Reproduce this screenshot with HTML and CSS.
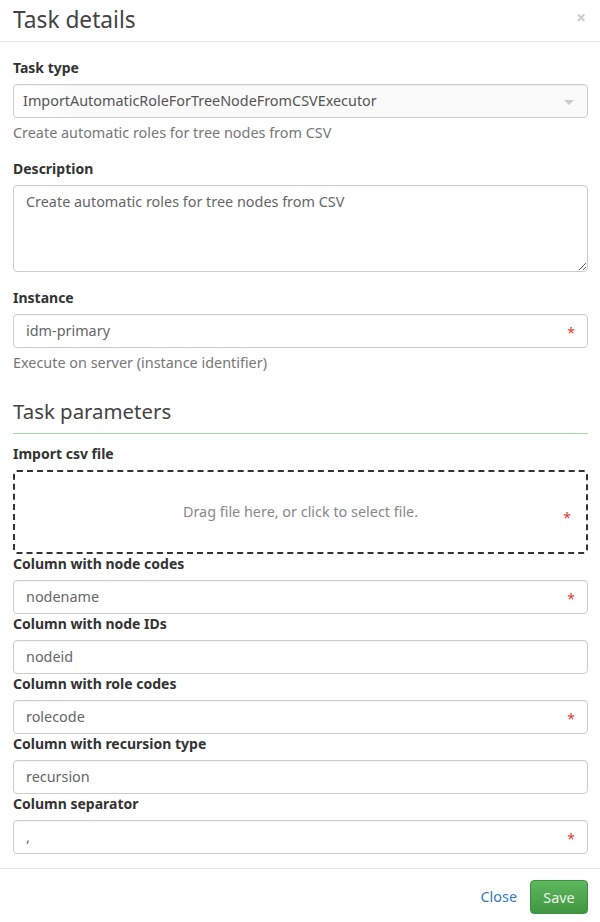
FILE: index.html
```html
<!DOCTYPE html>
<html lang="en">
<head>
  <meta charset="UTF-8">
  <title>Task details</title>
  <link rel="stylesheet" href="styles.css">
</head>
<body>

  <div class="modal">

    <!-- Header -->
    <div class="modal-header">
      <h4 class="modal-title">Task details</h4>
      <span class="close">&times;</span>
    </div>

    <!-- Body -->
    <div class="modal-body">

      <div class="form-group">
        <label>Task type</label>
        <div class="form-control select">
          <span>ImportAutomaticRoleForTreeNodeFromCSVExecutor</span>
          <span class="caret"></span>
        </div>
        <div class="help">Create automatic roles for tree nodes from CSV</div>
      </div>

      <div class="form-group">
        <label>Description</label>
        <textarea class="form-control textarea">Create automatic roles for tree nodes from CSV</textarea>
      </div>

      <div class="form-group">
        <label>Instance</label>
        <div class="form-control input">
          <span>idm-primary</span>
          <span class="required">*</span>
        </div>
        <div class="help">Execute on server (instance identifier)</div>
      </div>

      <h3 class="section-title">Task parameters</h3>

      <div class="param">
        <label>Import csv file</label>
        <div class="dropzone">
          <span>Drag file here, or click to select file.</span>
          <span class="required">*</span>
        </div>
      </div>

      <div class="param">
        <label>Column with node codes</label>
        <div class="form-control input">
          <span>nodename</span>
          <span class="required">*</span>
        </div>
      </div>

      <div class="param">
        <label>Column with node IDs</label>
        <div class="form-control input">
          <span>nodeid</span>
        </div>
      </div>

      <div class="param">
        <label>Column with role codes</label>
        <div class="form-control input">
          <span>rolecode</span>
          <span class="required">*</span>
        </div>
      </div>

      <div class="param">
        <label>Column with recursion type</label>
        <div class="form-control input">
          <span>recursion</span>
        </div>
      </div>

      <div class="param">
        <label>Column separator</label>
        <div class="form-control input">
          <span>,</span>
          <span class="required">*</span>
        </div>
      </div>

    </div>

    <!-- Footer -->
    <div class="modal-footer">
      <a class="btn-link">Close</a>
      <button class="btn-save">Save</button>
    </div>

  </div>

</body>
</html>
```

FILE: styles.css
```css
body {
    margin: 0;
    font-family: "Noto Sans", "Open Sans", sans-serif;
    font-size: 14.4px;
    line-height: 20px;
    color: #333;
    background: #fff;
}
.modal {
    width: 600px;
}
.modal-header {
    height: 42px;
    border-bottom: 1px solid #e5e5e5;
    display: flex;
    align-items: center;
    justify-content: space-between;
    padding: 0 14px 0 13px;
    box-sizing: border-box;
}
.modal-title {
    margin: 0;
    font-size: 22.7px;
    font-weight: normal;
    color: #444;
    line-height: 30px;
    margin-top: -1px;
}
.close {
    font-size: 17px;
    font-weight: bold;
    color: #ccc;
    margin-top: -6px;
}
.modal-body {
    padding: 16px 12px 14px 13px;
}
label {
    display: block;
    font-size: 14px;
    font-weight: bold;
    color: #333;
    margin-bottom: 6px;
}
.form-group {
    margin-bottom: 16px;
}
.form-control {
    box-sizing: border-box;
    width: 100%;
    height: 34px;
    border: 1px solid #ccc;
    border-radius: 4px;
    background: #fff;
    color: #666;
    font-family: inherit;
    font-size: 14.4px;
    box-shadow: inset 0 1px 1px rgba(0,0,0,0.04);
}
.input {
    display: flex;
    align-items: center;
    justify-content: space-between;
    padding: 0 12px 0 12px;
}
.select {
    display: flex;
    align-items: center;
    justify-content: space-between;
    padding: 0 13px 0 9px;
    background: linear-gradient(to right, #fff 0, #fff 20px, #fafafa 60px);
    color: #555;
}
.caret {
    width: 0;
    height: 0;
    border-left: 5px solid transparent;
    border-right: 5px solid transparent;
    border-top: 5px solid #ccc;
    margin-top: 2px;
}
.textarea {
    display: block;
    height: 87px;
    padding: 6px 12px;
    line-height: 20px;
    resize: vertical;
}
.help {
    margin-top: 5px;
    color: #777;
}
.required {
    color: #e53935;
    font-size: 14px;
    line-height: 1;
    margin-top: 4px;
}
.section-title {
    margin: 23px 0 0 0;
    font-size: 20.4px;
    font-weight: normal;
    color: #444;
    line-height: 30px;
    padding-bottom: 7px;
    border-bottom: 1px solid #a5d6a7;
}
.section-title + .param {
    margin-top: 10px;
}
.dropzone {
    box-sizing: border-box;
    height: 84px;
    border: 2px dashed #333;
    border-radius: 4px;
    display: flex;
    align-items: center;
    justify-content: center;
    position: relative;
    color: #888;
}
.dropzone .required {
    position: absolute;
    right: 15px;
    top: 35px;
}
.modal-footer {
    border-top: 1px solid #e5e5e5;
    display: flex;
    justify-content: flex-end;
    align-items: center;
    gap: 13px;
    padding: 11px 12px 9px 13px;
}
.btn-link {
    color: #337ab7;
    cursor: pointer;
}
.btn-save {
    height: 34px;
    width: 58px;
    border: 1px solid #3e8f3e;
    border-radius: 4px;
    background: linear-gradient(#5cb85c, #419641);
    color: #e8f5e8;
    font-family: inherit;
    font-size: 14.4px;
}
```
